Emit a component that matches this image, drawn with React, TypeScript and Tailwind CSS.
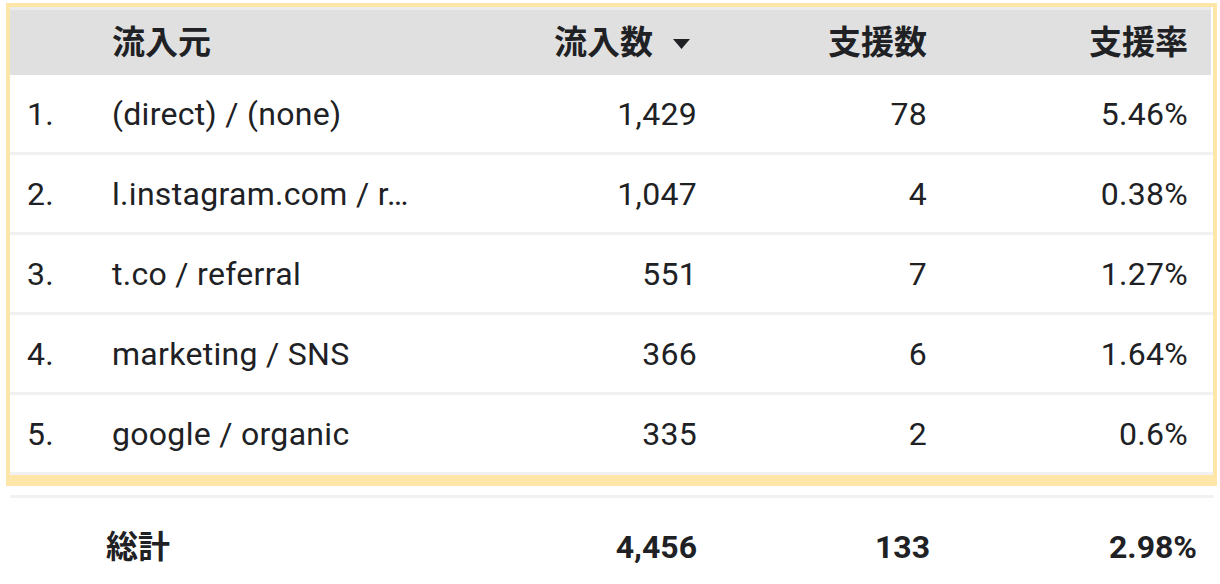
import React from "react";

const rows = [
  { i: "1.", src: "(direct) / (none)", a: "1,429", b: "78", c: "5.46%" },
  { i: "2.", src: "l.instagram.com / r…", a: "1,047", b: "4", c: "0.38%" },
  { i: "3.", src: "t.co / referral", a: "551", b: "7", c: "1.27%" },
  { i: "4.", src: "marketing / SNS", a: "366", b: "6", c: "1.64%" },
  { i: "5.", src: "google / organic", a: "335", b: "2", c: "0.6%" },
];

export default function App() {
  return (
    <div
      className="w-[1220px] h-[584px] bg-white text-[#202124] overflow-hidden"
      style={{ fontFamily: 'Roboto, "Noto Sans CJK JP", "Noto Sans", sans-serif' }}
    >
      <div className="pt-[3px] pl-[6px] w-[1217px]">
        <div className="border-t-4 border-x-4 border-b-[11px] border-[#fde6a8]">
          {/* header */}
          <div className="h-[68px] mr-[2px] bg-[#e0e0e0] border-t-[3px] border-[#ebebeb] flex items-center text-[33px] font-bold">
            <div className="w-[102px] shrink-0" />
            <div className="flex-1">流入元</div>
            <div className="w-[240px] shrink-0 flex items-center justify-end pr-[7px]">
              <span>流入数</span>
              <svg width="17" height="10" viewBox="0 0 17 10" className="ml-[20px] mt-[2px]">
                <polygon points="0,0 17,0 8.5,10" fill="#202124" />
              </svg>
            </div>
            <div className="w-[230px] shrink-0 text-right">支援数</div>
            <div className="w-[284px] shrink-0 text-right pr-[23px]">支援率</div>
          </div>
          {rows.map((r) => (
            <div
              key={r.i}
              className="h-[80px] border-b-[3px] border-[#f1f1f1] flex items-center text-[32px] tracking-[0.3px] pt-[1px]"
            >
              <div className="w-[102px] shrink-0 pl-[17px]">{r.i}</div>
              <div className="flex-1 whitespace-nowrap">{r.src}</div>
              <div className="w-[240px] shrink-0 text-right">{r.a}</div>
              <div className="w-[230px] shrink-0 text-right">{r.b}</div>
              <div className="w-[286px] shrink-0 text-right pr-[25px]">{r.c}</div>
            </div>
          ))}
        </div>
      </div>
      <div className="mt-[9px] ml-[10px] w-[1204px] h-[3px] bg-[#f1f1f1]" />
      <div className="h-[86px] flex items-center text-[32px] font-bold pt-[12px]">
        <div className="w-[106px] shrink-0" />
        <div className="flex-1">総計</div>
        <div className="w-[240px] shrink-0 text-right">4,456</div>
        <div className="w-[233px] shrink-0 text-right">133</div>
        <div className="w-[290px] shrink-0 text-right pr-[23px]">2.98%</div>
      </div>
    </div>
  );
}
